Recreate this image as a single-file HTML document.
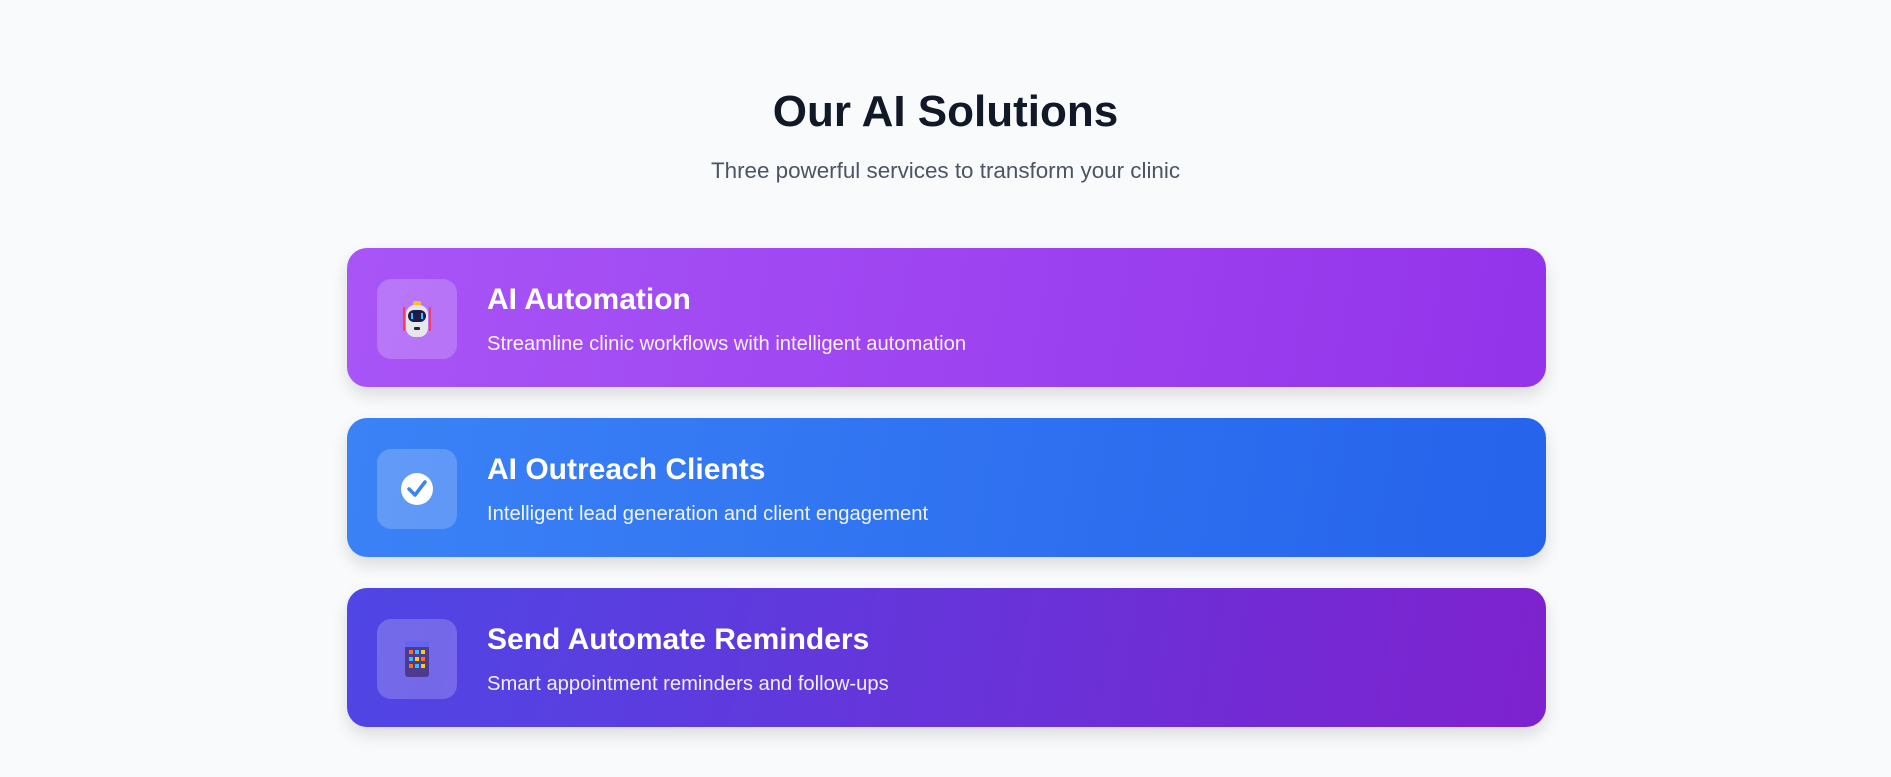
<!DOCTYPE html>
<html><head><meta charset="utf-8"><style>
html,body{margin:0;padding:0;background:#f9fafb;width:1891px;height:777px;overflow:hidden;font-family:"Liberation Sans","DejaVu Sans",sans-serif;}
h1{position:absolute;top:86px;left:0;width:1891px;text-align:center;margin:0;font-size:44px;font-weight:700;color:#111827;line-height:52px;}
.sub{position:absolute;top:157px;left:0;width:1891px;text-align:center;font-size:22.4px;color:#4b5563;line-height:28px;}
.card{position:absolute;left:347px;width:1199px;height:139px;border-radius:20px;box-shadow:0 8px 16px rgba(0,0,0,0.12);color:#fff;}
.ic{position:absolute;left:30px;top:31px;width:80px;height:80px;border-radius:14px;background:rgba(255,255,255,0.2);display:flex;align-items:center;justify-content:center;}
.t{position:absolute;left:140px;top:34px;font-size:30px;font-weight:700;line-height:36px;}
.d{position:absolute;left:140px;top:84px;font-size:20.2px;line-height:24px;color:rgba(255,255,255,0.92);}
</style></head><body>
<h1>Our AI Solutions</h1>
<div class="sub">Three powerful services to transform your clinic</div>

<div class="card" style="top:248px;background:linear-gradient(100deg,#a855f7,#9333ea);">
 <div class="ic"><svg width="40" height="44" viewBox="0 0 40 44">
  <rect x="6" y="10" width="2" height="24" fill="#f43f5e"/><rect x="32" y="10" width="2" height="24" fill="#f43f5e"/>
  <rect x="16" y="4" width="8" height="5" rx="2" fill="#fbbf24"/>
  <rect x="9" y="8" width="22" height="32" rx="9" fill="#e5e7eb"/>
  <rect x="11" y="13" width="18" height="12" rx="6" fill="#1e1b4b"/>
  <rect x="14" y="16" width="2" height="6" fill="#38bdf8"/><rect x="24" y="16" width="2" height="6" fill="#38bdf8"/>
  <rect x="17" y="30" width="6" height="3" rx="1" fill="#1f2937"/></svg></div>
 <div class="t">AI Automation</div>
 <div class="d">Streamline clinic workflows with intelligent automation</div>
</div>

<div class="card" style="top:418px;background:linear-gradient(100deg,#3b82f6,#2563eb);">
 <div class="ic"><svg width="36" height="36" viewBox="0 0 36 36"><circle cx="18" cy="18" r="16" fill="#fff"/><path d="M10 18 L16 24 L26 11" stroke="#3b82f6" stroke-width="3.5" fill="none" stroke-linecap="round" stroke-linejoin="round"/></svg></div>
 <div class="t">AI Outreach Clients</div>
 <div class="d">Intelligent lead generation and client engagement</div>
</div>

<div class="card" style="top:588px;background:linear-gradient(100deg,#4f46e5,#7e22ce);">
 <div class="ic"><svg width="30" height="40" viewBox="0 0 30 40">
  <rect x="3" y="2" width="24" height="36" rx="3" fill="#4c3b8f"/><rect x="3" y="2" width="24" height="6" fill="#6366f1"/>
  <g><rect x="7" y="11" width="4" height="4" fill="#f97316"/><rect x="13" y="11" width="4" height="4" fill="#38bdf8"/><rect x="19" y="11" width="4" height="4" fill="#facc15"/>
  <rect x="7" y="18" width="4" height="4" fill="#38bdf8"/><rect x="13" y="18" width="4" height="4" fill="#facc15"/><rect x="19" y="18" width="4" height="4" fill="#f97316"/>
  <rect x="7" y="25" width="4" height="4" fill="#f97316"/><rect x="13" y="25" width="4" height="4" fill="#38bdf8"/><rect x="19" y="25" width="4" height="4" fill="#facc15"/></g></svg></div>
 <div class="t">Send Automate Reminders</div>
 <div class="d">Smart appointment reminders and follow-ups</div>
</div>
</body></html>
